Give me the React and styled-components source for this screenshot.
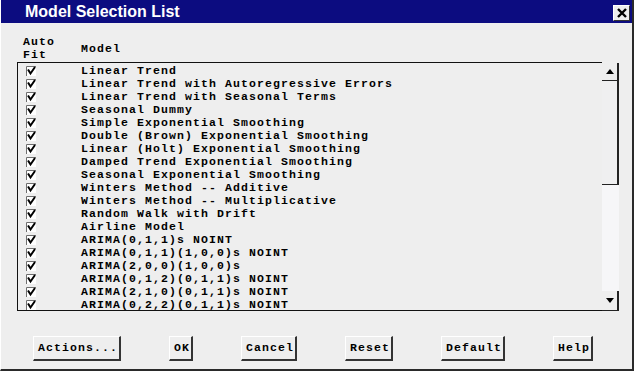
import React from 'react';
import styled, { createGlobalStyle } from 'styled-components';

const GlobalStyle = createGlobalStyle`
  html, body {
    margin: 0;
    padding: 0;
    background: #eeeeee;
  }
  body {
    font-family: "Liberation Mono", "DejaVu Sans Mono", monospace;
  }
`;

const models = [
  'Linear Trend',
  'Linear Trend with Autoregressive Errors',
  'Linear Trend with Seasonal Terms',
  'Seasonal Dummy',
  'Simple Exponential Smoothing',
  'Double (Brown) Exponential Smoothing',
  'Linear (Holt) Exponential Smoothing',
  'Damped Trend Exponential Smoothing',
  'Seasonal Exponential Smoothing',
  'Winters Method -- Additive',
  'Winters Method -- Multiplicative',
  'Random Walk with Drift',
  'Airline Model',
  'ARIMA(0,1,1)s NOINT',
  'ARIMA(0,1,1)(1,0,0)s NOINT',
  'ARIMA(2,0,0)(1,0,0)s',
  'ARIMA(0,1,2)(0,1,1)s NOINT',
  'ARIMA(2,1,0)(0,1,1)s NOINT',
  'ARIMA(0,2,2)(0,1,1)s NOINT',
];

const buttons = ['Actions...', 'OK', 'Cancel', 'Reset', 'Default', 'Help'];

// 8px per character like the old bitmap font
const monoFont = `
  font-family: "Liberation Mono", monospace;
  font-weight: bold;
  font-size: 11.5px;
  letter-spacing: 1.1px;
`;

const Window = styled.div`
  width: 634px;
  height: 371px;
  box-sizing: border-box;
  background: #eeeeee;
  border-left: 1px solid #ffffff;
  border-right: 2px solid #2a2a2a;
  border-bottom: 2px solid #2a2a2a;
  display: flex;
  flex-direction: column;
  overflow: hidden;
`;

const TitleBar = styled.div`
  flex: none;
  height: 23px;
  background: #0c0c80;
  display: flex;
  align-items: center;
  justify-content: space-between;
  padding: 0 2px 0 24px;
`;

const Title = styled.span`
  color: #ffffff;
  font: bold 16px "Liberation Sans", Arial, sans-serif;
`;

const CloseButton = styled.div`
  align-self: flex-end;
  margin-bottom: 2px;
  width: 17px;
  height: 16px;
  box-sizing: border-box;
  background: #eeeeee;
  border-top: 1px solid #ffffff;
  border-left: 1px solid #ffffff;
  border-right: 1px solid #333333;
  border-bottom: 1px solid #333333;
  display: flex;
  align-items: center;
  justify-content: center;
`;

const Header = styled.div`
  flex: none;
  height: 26px;
  padding: 12px 0 1px 22px;
  display: flex;
  align-items: center;
  ${monoFont}
  line-height: 13px;
  color: #000;
`;

const AutoFit = styled.div`
  width: 58px;
`;

const ModelHead = styled.div``;

const ListArea = styled.div`
  flex: none;
  display: flex;
  margin-left: 16px;
  height: 249px;
`;

const List = styled.div`
  width: 585px;
  height: 249px;
  box-sizing: border-box;
  border-top: 1px solid #111;
  border-left: 1px solid #111;
  border-bottom: 1px solid #111;
  padding-top: 1px;
  overflow: hidden;
`;

const Row = styled.div`
  display: flex;
  align-items: center;
  height: 13px;
  padding-left: 8px;
  ${monoFont}
  line-height: 13px;
  color: #000;
  white-space: pre;
`;

const Check = styled.span`
  flex: none;
  width: 10px;
  height: 10px;
  display: block;
`;

const ModelName = styled.span`
  margin-left: 45px;
`;

const ScrollBar = styled.div`
  width: 17px;
  height: 248px;
  margin-top: 1px;
  display: flex;
  flex-direction: column;
  background: #f6f6f8;
`;

const ArrowBtn = styled.div`
  flex: none;
  height: ${(p) => p.h}px;
  box-sizing: border-box;
  background: #eeeeee;
  border-right: 2px solid #222;
  border-bottom: 1px solid #222;
  display: flex;
  align-items: center;
  justify-content: center;
`;

const Thumb = styled.div`
  flex: none;
  height: 104px;
  box-sizing: border-box;
  background: #efeff0;
  border-right: 2px solid #222;
  border-bottom: 1px solid #222;
`;

const Track = styled.div`
  flex: 1;
`;

const ButtonRow = styled.div`
  flex: none;
  display: flex;
  gap: 48px;
  margin-top: 25px;
  padding-left: 32px;
`;

const Button = styled.button`
  appearance: none;
  height: 25px;
  box-sizing: border-box;
  margin: 0;
  padding: 0 1px 0 4px;
  background: #eeeeee;
  border-top: 1px solid #ffffff;
  border-left: 1px solid #ffffff;
  border-right: 2px solid #333333;
  border-bottom: 2px solid #333333;
  border-radius: 0;
  ${monoFont}
  line-height: 20px;
  color: #000;
`;

const CheckIcon = () => (
  <Check>
    <svg width="10" height="10" viewBox="0 0 10 10">
      <rect x="0" y="0" width="10" height="10" fill="#ffffff" />
      <path d="M0.5 10V0.5H10" fill="none" stroke="#6e6e6e" strokeWidth="1" />
      <path d="M2 3.5L4.5 7.5L9 1" fill="none" stroke="#000" strokeWidth="2" />
    </svg>
  </Check>
);

const Arrow = ({ down }) => (
  <svg width="8" height="5" viewBox="0 0 8 5">
    <path d={down ? 'M0 0H8L4 5Z' : 'M0 5H8L4 0Z'} fill="#000" />
  </svg>
);

export default function App() {
  return (
    <>
      <GlobalStyle />
      <Window>
        <TitleBar>
          <Title>Model Selection List</Title>
          <CloseButton>
            <svg width="10" height="10" viewBox="0 0 10 10">
              <path d="M1 1L9 9M9 1L1 9" stroke="#000" strokeWidth="2.4" />
            </svg>
          </CloseButton>
        </TitleBar>
        <Header>
          <AutoFit>
            Auto
            <br />
            Fit
          </AutoFit>
          <ModelHead>Model</ModelHead>
        </Header>
        <ListArea>
          <List>
            {models.map((m) => (
              <Row key={m}>
                <CheckIcon />
                <ModelName>{m}</ModelName>
              </Row>
            ))}
          </List>
          <ScrollBar>
            <ArrowBtn h={18}>
              <Arrow />
            </ArrowBtn>
            <Thumb />
            <Track />
            <ArrowBtn h={20}>
              <Arrow down />
            </ArrowBtn>
          </ScrollBar>
        </ListArea>
        <ButtonRow>
          {buttons.map((b) => (
            <Button key={b}>{b}</Button>
          ))}
        </ButtonRow>
      </Window>
    </>
  );
}
